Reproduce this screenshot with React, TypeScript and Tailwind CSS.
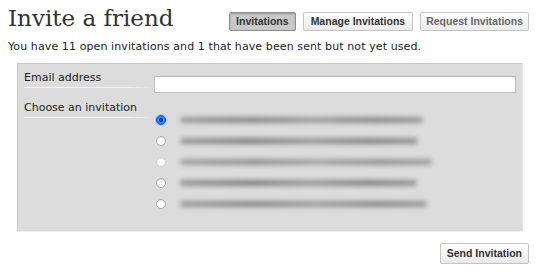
import React from 'react';

const sans = "font-['DejaVu_Sans',sans-serif]";
const btnFont = "font-['Liberation_Sans',sans-serif] text-[10.5px] font-bold";

const blurLines = [
  { w: 243, o: 0.8 },
  { w: 238, o: 0.85 },
  { w: 252, o: 0.7 },
  { w: 237, o: 0.85 },
  { w: 247, o: 0.8 },
];

const TabButton = ({ label, active, muted }: { label: string; active?: boolean; muted?: boolean }) => {
  if (active) {
    return (
      <button className={`h-[19px] px-[6px] rounded-[2px] border border-[#8f8f8f] bg-[#c9c9c9] ${btnFont} text-[#333] shadow-[inset_0_1px_2px_rgba(0,0,0,0.25)]`}>
        {label}
      </button>
    );
  }
  return (
    <button
      className={
        muted
          ? `h-[19px] px-[5px] rounded-[2px] border border-[#c4c4c4] bg-gradient-to-b from-white to-[#e9e9e9] ${btnFont} text-[#666]`
          : `h-[19px] px-[7px] rounded-[2px] border border-[#c4c4c4] bg-gradient-to-b from-white to-[#e9e9e9] ${btnFont} text-[#333]`
      }
    >
      {label}
    </button>
  );
};

export default function App() {
  return (
    <div className={`w-[540px] h-[272px] bg-white text-[#222] ${sans} overflow-hidden`}>
      <div className="flex items-start justify-between pl-[8px] pr-[11px] pt-[3px]">
        <h1 className="font-['DejaVu_Serif',serif] text-[23px] leading-[30px] text-[#333] whitespace-nowrap">Invite a friend</h1>
        <div className="flex gap-[7px] mt-[9px] shrink-0">
          <TabButton label="Invitations" active />
          <TabButton label="Manage Invitations" />
          <TabButton label="Request Invitations" muted />
        </div>
      </div>

      <p className="pl-[8px] mt-[7px] text-[11px] leading-[14px] tracking-[0.1px]">
        You have 11 open invitations and 1 that have been sent but not yet used.
      </p>

      <div className="ml-[17px] mt-[9px] w-[506px] h-[168px] bg-[#dcdcdc] border-t border-l border-[#c8c8c8] border-r border-r-[#e6e6e6] shadow-[0_1px_0_#eee] pl-[6px] pr-[7px] pt-[7px]">
        <div className="grid grid-cols-[130px_1fr] items-start">
          <div className="text-[11px] leading-[14px] pb-[3px] bg-[linear-gradient(to_right,#f4f4f4,#f4f4f4_80%,#dcdcdc)] bg-no-repeat bg-[length:100%_1px] bg-bottom">
            Email address
          </div>
          <input className="mt-[5px] h-[17px] w-[362px] bg-white border border-[#bcbcbc] outline-none" />

          <div className="mt-[8px] text-[11px] leading-[14px] pb-[3px] bg-[linear-gradient(to_right,#f4f4f4,#f4f4f4_80%,#dcdcdc)] bg-no-repeat bg-[length:100%_1px] bg-bottom">
            Choose an invitation
          </div>
          <div />
        </div>

        <div className="flex flex-col gap-[11px] ml-[132px] -mt-[3px]">
          {blurLines.map((l, i) => (
            <div key={i} className="flex items-center h-[10px]">
              {i === 0 ? (
                <span className="w-[10px] h-[10px] rounded-full bg-[#2d7ff0] border border-[#1a5fd0] flex items-center justify-center shadow-[0_0_0_1px_#9cc3f5]">
                  <span className="w-[4px] h-[4px] rounded-full bg-[#0b3c9a]" />
                </span>
              ) : (
                <span className={`w-[10px] h-[10px] rounded-full bg-white border ${i === 2 ? 'border-[#cfcfcf]' : 'border-[#a8a8a8]'} shadow-[inset_0_1px_1px_rgba(0,0,0,0.1)]`} />
              )}
              <div
                className="ml-[14px] h-[6px] rounded-full bg-[linear-gradient(to_right,#8a8a8a,#6f6f6f_30%,#8c8c8c_55%,#727272_80%,#888)] blur-[2.5px]"
                style={{ width: l.w, opacity: l.o }}
              />
            </div>
          ))}
        </div>
      </div>

      <div className="flex justify-end pr-[11px] mt-[12px]">
        <button className={`h-[21px] px-[6px] rounded-[2px] border border-[#c4c4c4] bg-gradient-to-b from-white to-[#e9e9e9] ${btnFont} text-[#333]`}>
          Send Invitation
        </button>
      </div>
    </div>
  );
}
